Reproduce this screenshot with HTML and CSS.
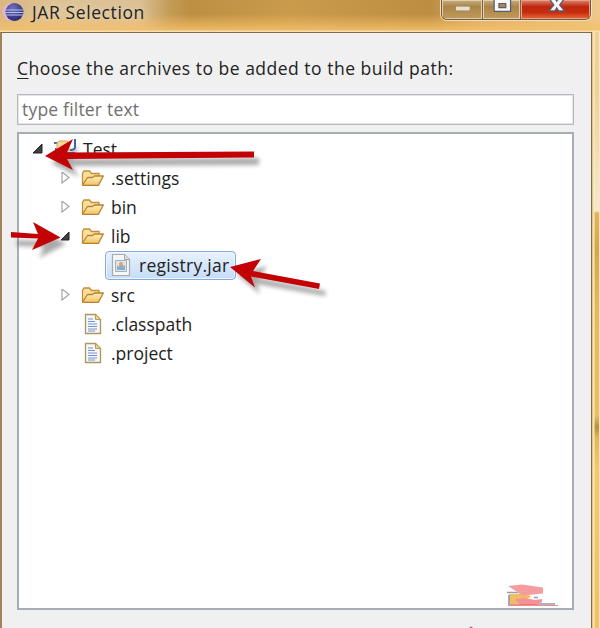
FILE: index.html
```
<!DOCTYPE html>
<html lang="en">
<head>
<meta charset="utf-8">
<title>JAR Selection</title>
<link rel="stylesheet" href="styles.css">
</head>
<body>
<svg class="defs" aria-hidden="true">
  <defs>
    <linearGradient id="gold" x1="0" y1="0" x2="0" y2="1"><stop offset="0" stop-color="#fff0bd"/><stop offset="1" stop-color="#f0c263"/></linearGradient>
    <radialGradient id="orb" cx=".4" cy=".3" r=".75"><stop offset="0" stop-color="#7771bd"/><stop offset=".6" stop-color="#40438f"/><stop offset="1" stop-color="#252569"/></radialGradient>
    <filter id="soft" x="-20%" y="-50%" width="140%" height="220%"><feGaussianBlur stdDeviation="2"/></filter>
    <symbol id="folder" viewBox="0 0 24 20"><path d="M1.5 17V5.5L3 3h5.500l2 2.500h7.500V9" fill="#fbdf9a" stroke="#c58e3c" stroke-width="1.300"/><path d="M1.500 17L6.500 9.500h5L13.500 8h8.800L17.500 17.300H2z" fill="url(#gold)" stroke="#b9802f" stroke-width="1.300" stroke-linejoin="round"/></symbol>
    <symbol id="file" viewBox="0 0 18 22"><path d="M1.500 1.500h10l5 5v14h-15z" fill="#f4f8fd" stroke="#aa985c" stroke-width="1.300"/><path d="M11.500 1.500v5h5z" fill="#ead78e" stroke="#b99d4d"/><path d="M4 6h5M4 8.500h7M4 11h9M4 13.500h9M4 16h9M4 18h7" stroke="#7891c5" stroke-width="1.100"/></symbol>
  </defs>
</svg>
<div class="window">
  <header class="titlebar">
    <svg class="orb" viewBox="0 0 22 20"><ellipse cx="9" cy="10" rx="8.500" ry="9" fill="#dfb6cc"/><ellipse cx="12.500" cy="10" rx="9" ry="9" fill="url(#orb)"/><path d="M4 8h17M3.500 10.500h18M4 13h17" stroke="#b9c2ea" stroke-width="1"/></svg>
    <span class="title">JAR Selection</span>
    <div class="controls">
      <span class="min"><svg viewBox="0 0 41 18"><rect x="14" y="6" width="15" height="5" fill="#eadfca" stroke="#a08c69"/></svg></span>
      <span class="max"><svg viewBox="0 0 39 18"><path d="M11.500-4h17v15.500h-17z M16.500 3.500v4h7v-4z" fill="#f8f8f8" fill-rule="evenodd" stroke="#5c5d6b" stroke-width="1.300"/></svg></span>
      <span class="close"><svg viewBox="0 0 69 18"><path d="M28-2h6l2 3 2-3h6l-5 7 5 6h-6l-2-3-2 3h-6l5-6z" fill="#f5f5f5" stroke="#5f5964" stroke-width="1.300"/></svg></span>
    </div>
  </header>
  <main class="dialog">
    <label class="prompt"><u>C</u>hoose the archives to be added to the build path:</label>
    <div class="filter"><span>type filter text</span></div>
    <div class="tree">
      <div class="row root"><svg class="twist" viewBox="0 0 12 12"><path d="M10 1v9H1z" fill="#404040" stroke="#222"/></svg><svg class="icon" viewBox="0 0 24 20"><path d="M1 4h7M2 10h5M1 17h17" stroke="#536cae" stroke-width="2"/><path d="M4 15V4l2-2h8l2 2v8" fill="#f9d896" stroke="#d6a35d"/><path d="M22 0v8q0 3-5 3M14 14h8" fill="none" stroke="#405da9" stroke-width="2"/></svg><span>Test</span></div>
      <div class="row"><svg class="twist" viewBox="0 0 12 12"><path d="M2 0v11l7-5.500z" fill="#fff" stroke="#a5a5a5" stroke-width="1.200"/></svg><svg class="icon"><use href="#folder"/></svg><span>.settings</span></div>
      <div class="row"><svg class="twist" viewBox="0 0 12 12"><path d="M2 0v11l7-5.500z" fill="#fff" stroke="#a5a5a5" stroke-width="1.200"/></svg><svg class="icon"><use href="#folder"/></svg><span>bin</span></div>
      <div class="row"><svg class="twist" viewBox="0 0 12 12"><path d="M9 2v8H1z" fill="#404040" stroke="#222"/></svg><svg class="icon"><use href="#folder"/></svg><span>lib</span></div>
      <div class="row jar"><div class="selected"><svg class="jaricon" viewBox="0 0 20 24"><path d="M1.500 1.500h12l5 5v16h-17z" fill="#f5f6f7" stroke="#a8a9ac" stroke-width="1.200"/><path d="M13.500 1.500v5h5" fill="#ddd" stroke="#aaa"/><path d="M4.500 7.500h11v11h-11z" fill="#dce6ec" stroke="#a0b1c0"/><path d="M6 17v-5l2 2 1-5 2 1 1 3 2-1v5z" fill="#8cabc5"/><circle cx="10" cy="11" r="2" fill="#e4a168"/></svg><span class="wide">registry.jar</span></div></div>
      <div class="row"><svg class="twist" viewBox="0 0 12 12"><path d="M2 0v11l7-5.500z" fill="#fff" stroke="#a5a5a5" stroke-width="1.200"/></svg><svg class="icon"><use href="#folder"/></svg><span>src</span></div>
      <div class="row"><i class="twist"></i><svg class="icon file"><use href="#file"/></svg><span>.classpath</span></div>
      <div class="row"><i class="twist"></i><svg class="icon file"><use href="#file"/></svg><span>.project</span></div>
    </div>
  </main>
</div>
<svg class="marks" viewBox="0 0 600 628" aria-hidden="true">
  <g fill="#666" opacity=".55" filter="url(#soft)" transform="translate(6 7)"><path d="M45 156l28-17-6 13 186-1v7l-187 1 7 11z"/><path d="M11 233l27 1-5-12 27 15-27 14 5-11-27-1z"/><path d="M230 267l31-8-8 12 67 13-1 5-68-12 3 10z"/></g>
  <g fill="#c30205"><path d="M45 156l28-17-6 13.500 187-1v6l-187 1.500 6 11z"/><path d="M11 232l27 2-5-12 27.500 15.500L32 250l6-11.500-27-1z"/><path d="M230 267l31-8-8 12 67 12.500-1 5.500-68-12.500 4 11z"/></g>
  <path d="M509 594h9l5-4 8 7-11 5 14 2h-25z" fill="#efbd63"/><path d="M507 592.500h11M509 595v10M534 597.500h4M538 604h17" stroke="#939bae" stroke-width="1.700"/><path d="M508 586l14-1.500 21 3v6l-20 2-8-5z" fill="#f49ca0"/><path d="M515 599l10-1 10 2 7-1v3l-7 3h-15z" fill="#f49296"/><path d="M508 605.500h50M510 604.500h28" stroke="#ee6d73" stroke-width=".8"/>
  <path d="M469 628l2-1.500 2 1.500z" fill="#9e6265"/>
</svg>
</body>
</html>
```
FILE: styles.css
```
* { box-sizing: border-box; }
body { margin: 0; width: 600px; height: 628px; overflow: hidden; font: 18px "Open Sans", "Noto Sans", sans-serif; color: #222; }
.defs { position: absolute; width: 0; height: 0; }
.window { width: 600px; height: 628px; display: grid; grid-template-rows: 32px 1fr; border-right: 1px solid #f9e7be; padding-right: 7px; background: linear-gradient(90deg, transparent 592px, #d7b77b 592px, #fff0ca 594px, transparent 595px), linear-gradient(#f0cf91 0, #f0d09a 90px, #f2e3c3 180px, #f4e8cc 211px, #e6b35a 213px, #d9a44e 250px, #ebb65c 310px, #f0bd65 415px, #b98c41 427px, #e8b458 438px, #f8c66f 470px, #f5be65 628px); }
.titlebar { display: flex; align-items: flex-start; width: 600px; height: 32px; background: linear-gradient(90deg, #d8b782 0, #dfc395 60px, #dac094 140px, #c39b56 170px, #bd8f43 190px, #ca9b4b 290px, #bd8e41 430px, #d9ad68 480px, #edc98e 600px); position: relative; }
.titlebar::after { content: ""; position: absolute; inset: 14px 0 0; background: linear-gradient(transparent, #f4bf68dd 16px, #f7ddb0 17px); }
.orb, .title { position: relative; z-index: 1; }
.orb { width: 22px; height: 20px; margin: 2px 0 0 2px; flex: none; }
.title { width: 115px; margin-left: 8px; line-height: 24px; white-space: nowrap; font-size: 17.5px; letter-spacing: .6px; text-shadow: 0 0 8px #fff8; }
.controls { display: flex; position: relative; z-index: 1; margin-left: 294px; width: 150px; height: 20px; border: 1px solid #695b47; border-top: 0; border-radius: 0 0 6px 6px; box-shadow: 0 0 0 1px #f8dfb3; overflow: hidden; }
.controls span { border-right: 1px solid #786348; box-shadow: inset 0 0 0 1px #e5cfaa; background: linear-gradient(#c7ae81, #a98548 35%, #c29b5c); }
.controls svg { display: block; width: 100%; height: 18px; }
.min { width: 41px; } .max { width: 39px; }
.controls .close { width: 69px; border-right: 0; background: linear-gradient(#d98a75 0, #bf260d 35%, #c52c0d 65%, #e96a39); box-shadow: inset 0 0 0 1px #e9a086; }
.dialog { width: 592px; padding: 21px 17px 18px 15px; border: 1px solid #806b46; border-left-width: 2px; border-left-color: #a08254; background: #f0f0f0; display: flex; flex-direction: column; }
.prompt { display: block; height: 40px; line-height: 29px; white-space: nowrap; font-size: 17.5px; letter-spacing: .5px; }
.prompt u { text-decoration-thickness: 1px; text-underline-offset: 3px; }
.filter { height: 31px; flex: none; border: 1px solid #b5b8c1; background: #fff; color: #707070; padding-left: 4px; line-height: 29px; font-size: 17.5px; letter-spacing: .2px; box-shadow: inset 0 0 0 1px #e4e5e9; }
.tree { height: 478px; flex: none; margin-top: 7px; background: #fff; border: 2px solid #a7adb7; }
.row { height: 29.2px; display: flex; align-items: center; padding-left: 41px; white-space: nowrap; font-size: 17.5px; }
.root { padding-left: 13px; }
.twist { display: block; width: 12px; height: 12px; flex: none; }
.icon { width: 24px; height: 20px; margin: 0 6px 0 9px; flex: none; }
.icon.file { width: 18px; height: 22px; margin: 0 9px 0 12px; }
.wide { letter-spacing: .25px; }
.jar { padding-left: 86px; }
.selected { width: 131px; height: 29px; display: flex; align-items: center; border: 1px solid #84aadb; border-radius: 4px; background: linear-gradient(#e8f2fe, #c5dcf8); box-shadow: inset 0 0 0 1px #eef6ff; }
.jaricon { width: 20px; height: 24px; margin: 0 8px 0 5px; flex: none; }
.marks { position: absolute; left: 0; top: 0; width: 600px; height: 628px; pointer-events: none; }
```
